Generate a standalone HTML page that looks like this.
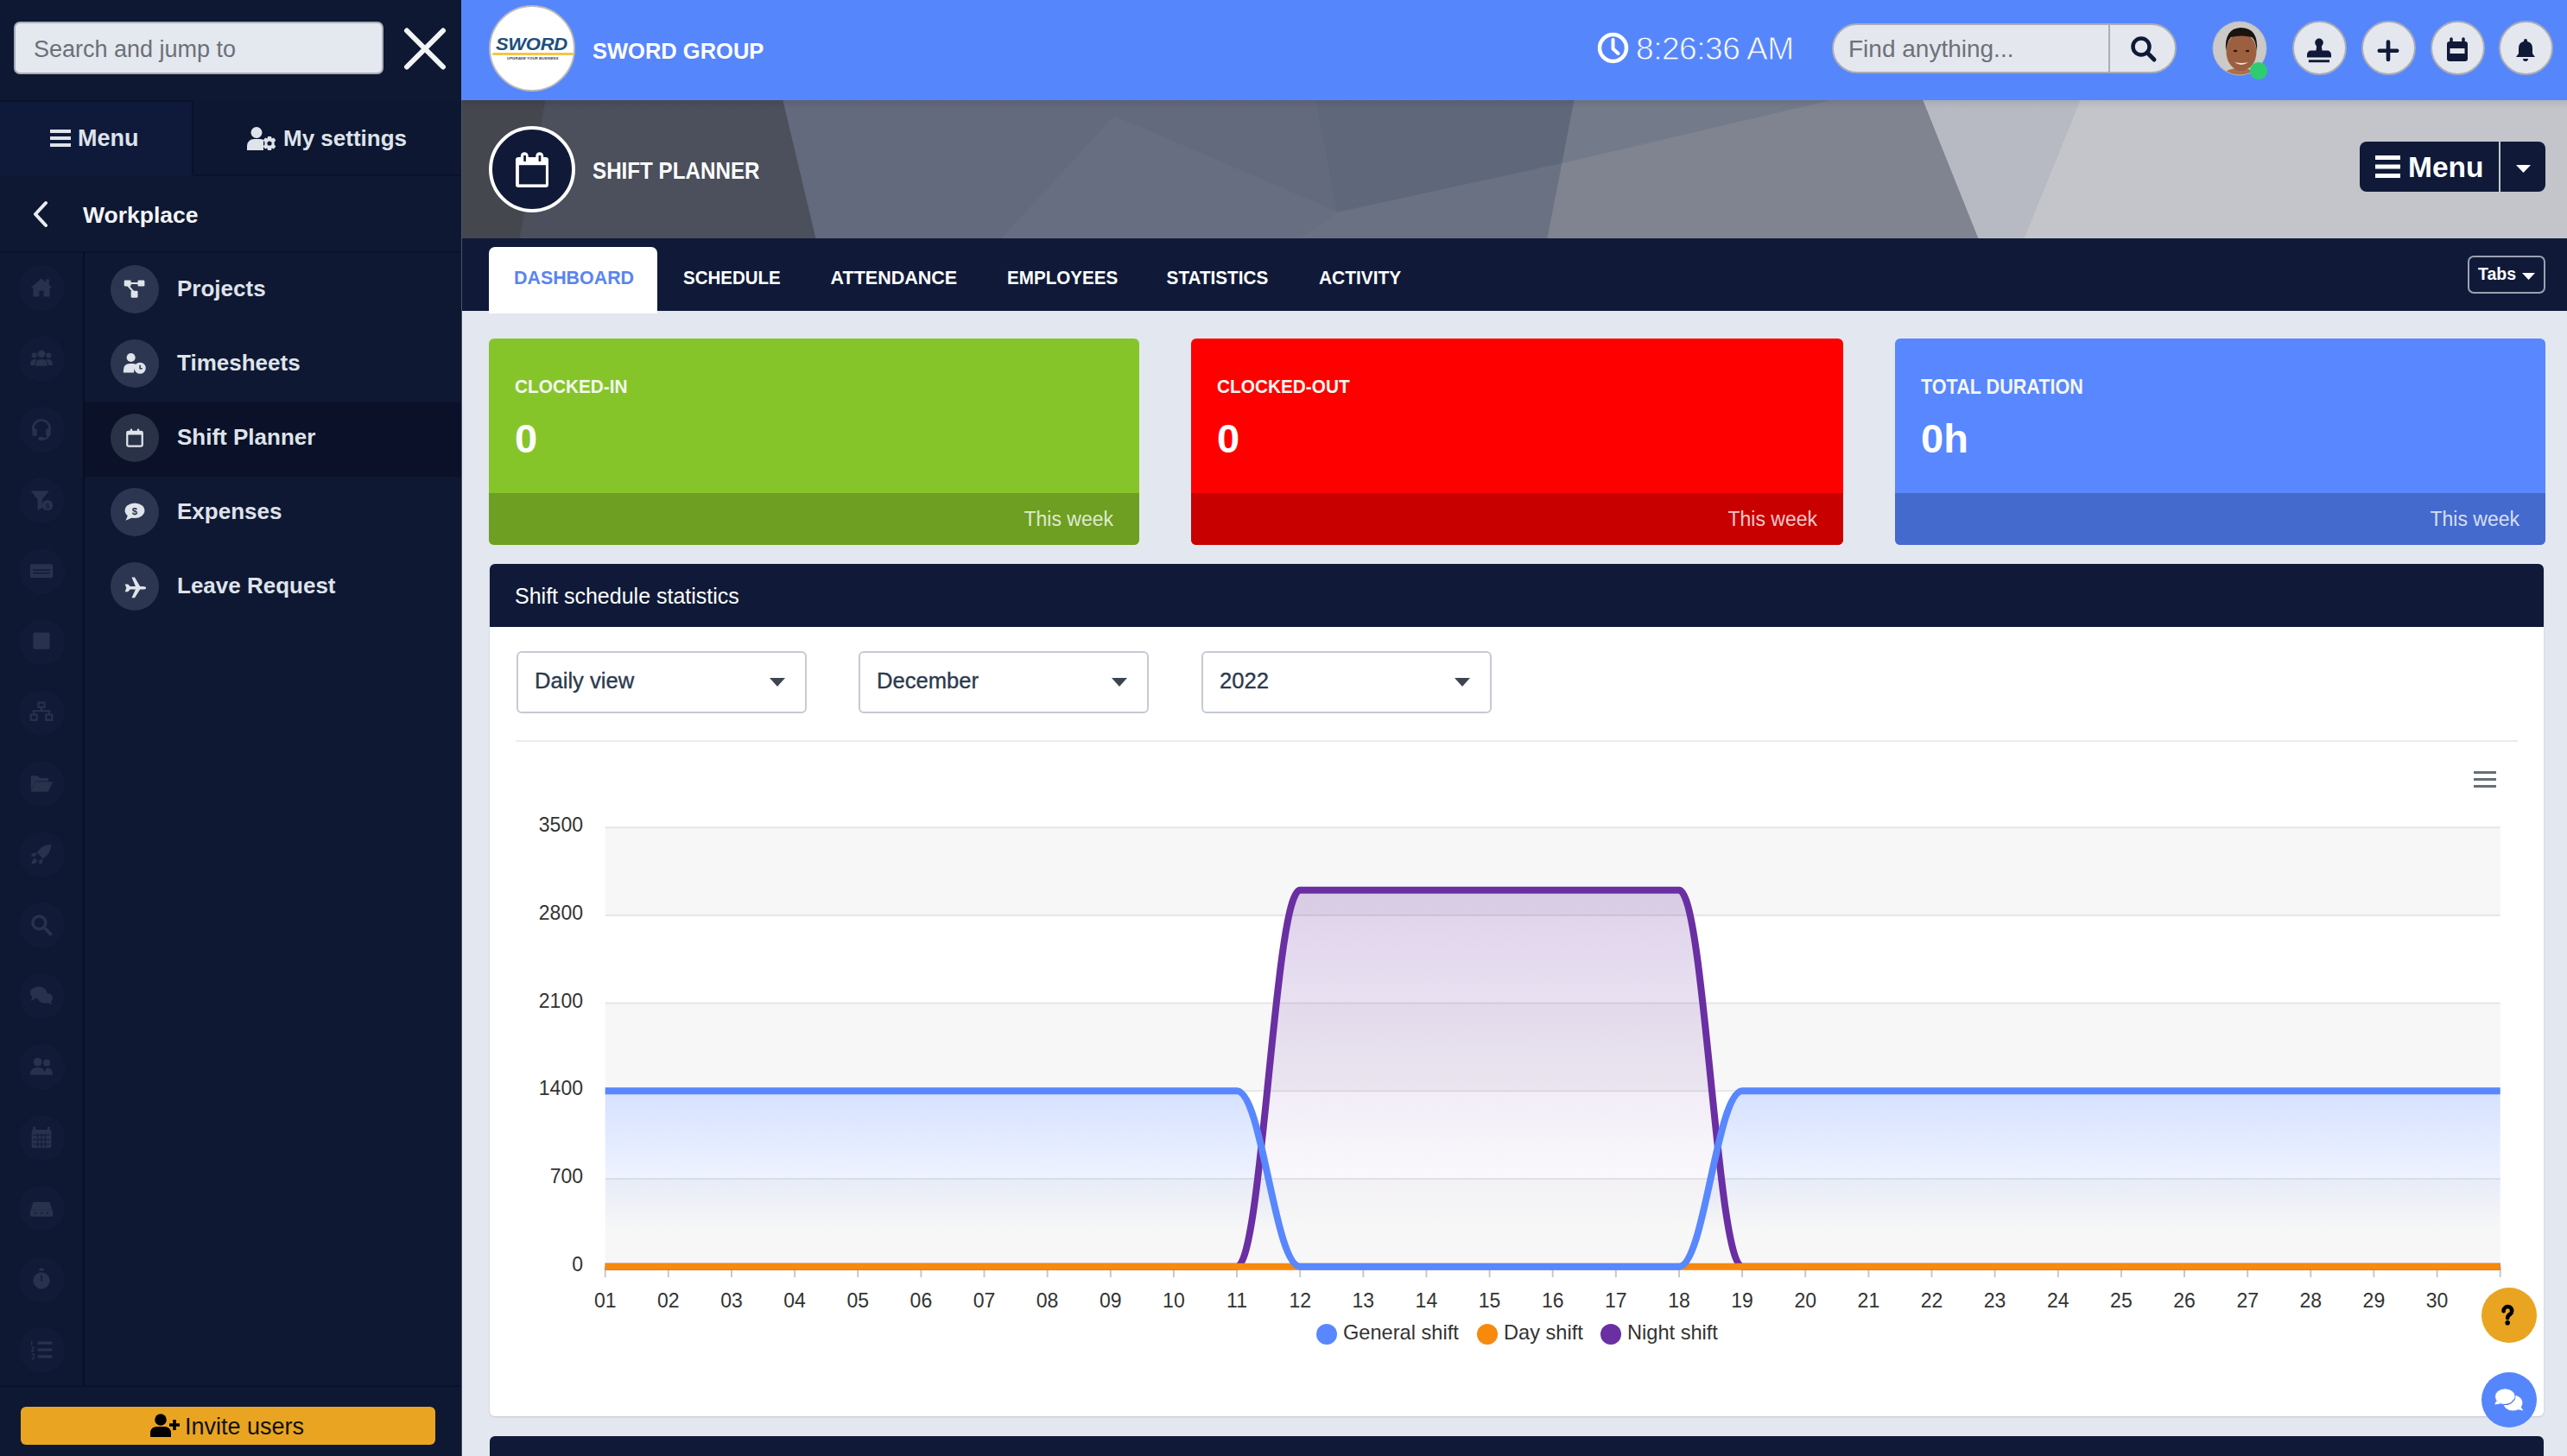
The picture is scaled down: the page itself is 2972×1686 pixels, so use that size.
<!DOCTYPE html>
<html><head><meta charset="utf-8">
<style>
*{box-sizing:border-box;margin:0;padding:0}
html,body{width:2972px;height:1686px;overflow:hidden}
body{position:relative;background:#e3e7ef;font-family:"Liberation Sans",sans-serif;}
.a{position:absolute}
.t{position:absolute;white-space:nowrap;line-height:1}
</style></head><body>

<!-- ============ SIDEBAR ============ -->
<div class="a" style="left:0;top:0;width:535px;height:1686px;background:#0e1833"></div>
<!-- search -->
<div class="a" style="left:16px;top:25px;width:428px;height:61px;background:#e4e8ef;border:2px solid #a7acb8;border-radius:7px"></div>
<div class="t" style="left:39px;top:44px;font-size:27px;color:#6b7078">Search and jump to</div>
<!-- close X -->
<svg class="a" style="left:462px;top:27px" width="60" height="60" viewBox="0 0 60 60"><path d="M9 8.5 L51 50.5 M51 8.5 L9 50.5" stroke="#f2f4f6" stroke-width="6" stroke-linecap="round"/></svg>

<!-- menu / settings tabs -->
<div class="a" style="left:0;top:116px;width:224px;height:87px;background:#0f1a3a;border-top:2px solid #0a1226;border-right:2px solid #0a1226"></div>
<div class="a" style="left:224px;top:117px;width:310px;height:87px;background:#0d1731;border-bottom:2px solid #0a1226"></div>
<svg class="a" style="left:58px;top:150px" width="24" height="20" viewBox="0 0 24 20"><rect x="0" y="0" width="24" height="4" fill="#dfe3ea"/><rect x="0" y="8" width="24" height="4" fill="#dfe3ea"/><rect x="0" y="16" width="24" height="4" fill="#dfe3ea"/></svg>
<div class="t" style="left:90px;top:147px;font-size:27px;font-weight:bold;color:#dfe3ea">Menu</div>
<div class="t" style="left:328px;top:147px;font-size:26px;font-weight:bold;color:#dfe3ea">My settings</div>
<svg class="a" style="left:286px;top:147px" width="35" height="27" viewBox="0 0 35 27"><circle cx="11" cy="6.5" r="6.5" fill="#dfe3ea"/><path d="M0 27 V22 A8 8 0 0 1 8 14 H15 A8 8 0 0 1 19 15 L19 27Z" fill="#dfe3ea"/><g transform="translate(26,19)"><path d="M-2 -8 H2 L2.6 -5.6 L5 -6.6 L7.3 -3.5 L5.6 -1.6 L5.6 1.6 L7.3 3.5 L5 6.6 L2.6 5.6 L2 8 H-2 L-2.6 5.6 L-5 6.6 L-7.3 3.5 L-5.6 1.6 L-5.6 -1.6 L-7.3 -3.5 L-5 -6.6 L-2.6 -5.6Z" fill="#dfe3ea"/><circle r="2.6" fill="#0d1733"/></g></svg>

<!-- workplace -->
<svg class="a" style="left:36px;top:232px" width="22" height="32" viewBox="0 0 22 32"><path d="M17 3 L5 16 L17 29" stroke="#e9ecf1" stroke-width="4" fill="none" stroke-linecap="round" stroke-linejoin="round"/></svg>
<div class="t" style="left:96px;top:236px;font-size:26.5px;font-weight:bold;color:#f3f5f8">Workplace</div>
<div class="a" style="left:0;top:291px;width:535px;height:2px;background:#0a1229"></div>

<!-- rail -->
<div class="a" style="left:96px;top:293px;width:2px;height:1312px;background:#090e20"></div>
<div class="a" style="left:22px;top:307px;width:53px;height:53px;border-radius:50%;background:#111b38"></div>
<svg class="a" style="left:34px;top:319px" width="28" height="28" viewBox="0 0 32 32"><path d="M16 4 L2 16 L5 16 L5 28 L13 28 L13 20 L19 20 L19 28 L27 28 L27 16 L30 16 Z" fill="#29324d"/><rect x="22" y="5" width="4" height="7" fill="#29324d"/></svg>
<div class="a" style="left:22px;top:389px;width:53px;height:53px;border-radius:50%;background:#111b38"></div>
<svg class="a" style="left:34px;top:401px" width="28" height="28" viewBox="0 0 32 32"><circle cx="16" cy="10" r="5" fill="#29324d"/><circle cx="6.5" cy="12" r="3.5" fill="#29324d"/><circle cx="25.5" cy="12" r="3.5" fill="#29324d"/><path d="M8 26 Q8 17 16 17 Q24 17 24 26Z" fill="#29324d"/><path d="M1 25 Q1 17 7 17 Q9 17 10 18 Q7 21 7 25Z" fill="#29324d"/><path d="M31 25 Q31 17 25 17 Q23 17 22 18 Q25 21 25 25Z" fill="#29324d"/></svg>
<div class="a" style="left:22px;top:471px;width:53px;height:53px;border-radius:50%;background:#111b38"></div>
<svg class="a" style="left:34px;top:483px" width="28" height="28" viewBox="0 0 32 32"><path d="M5 18 V15 A11 11 0 0 1 27 15 V18" stroke="#29324d" stroke-width="3" fill="none"/><rect x="4" y="15" width="6" height="10" rx="2" fill="#29324d"/><rect x="22" y="15" width="6" height="10" rx="2" fill="#29324d"/><path d="M25 24 Q25 29 17 29" stroke="#29324d" stroke-width="2.5" fill="none"/><rect x="12" y="26" width="7" height="5" rx="2" fill="#29324d"/></svg>
<div class="a" style="left:22px;top:553px;width:53px;height:53px;border-radius:50%;background:#111b38"></div>
<svg class="a" style="left:34px;top:565px" width="28" height="28" viewBox="0 0 32 32"><path d="M2 4 H26 L17 15 V26 L11 30 V15 Z" fill="#29324d"/><circle cx="24" cy="23" r="7" fill="#29324d"/><text x="24" y="27" font-size="10" font-weight="bold" text-anchor="middle" fill="#131e3b" font-family="Liberation Sans">$</text></svg>
<div class="a" style="left:22px;top:635px;width:53px;height:53px;border-radius:50%;background:#111b38"></div>
<svg class="a" style="left:34px;top:647px" width="28" height="28" viewBox="0 0 32 32"><rect x="1" y="7" width="30" height="18" rx="2" fill="#29324d"/><rect x="5" y="14" width="22" height="2" fill="#131e3b"/><rect x="5" y="18" width="22" height="2" fill="#131e3b"/></svg>
<div class="a" style="left:22px;top:717px;width:53px;height:53px;border-radius:50%;background:#111b38"></div>
<svg class="a" style="left:34px;top:729px" width="28" height="28" viewBox="0 0 32 32"><rect x="5" y="4" width="22" height="22" rx="2" fill="#29324d"/></svg>
<div class="a" style="left:22px;top:799px;width:53px;height:53px;border-radius:50%;background:#111b38"></div>
<svg class="a" style="left:34px;top:811px" width="28" height="28" viewBox="0 0 32 32"><rect x="12" y="3" width="8" height="6" fill="none" stroke="#29324d" stroke-width="2.5"/><path d="M16 9 V14 M4 14 H28 M6 14 V19 M26 14 V19" stroke="#29324d" stroke-width="2.5" fill="none"/><rect x="2" y="19" width="8" height="7" fill="none" stroke="#29324d" stroke-width="2.5"/><rect x="22" y="19" width="8" height="7" fill="none" stroke="#29324d" stroke-width="2.5"/></svg>
<div class="a" style="left:22px;top:881px;width:53px;height:53px;border-radius:50%;background:#111b38"></div>
<svg class="a" style="left:34px;top:893px" width="28" height="28" viewBox="0 0 32 32"><path d="M2 6 H11 L14 9 H25 V13 H8 L2 26 Z" fill="#29324d"/><path d="M8 14 H31 L25 27 H2 Z" fill="#29324d"/></svg>
<div class="a" style="left:22px;top:963px;width:53px;height:53px;border-radius:50%;background:#111b38"></div>
<svg class="a" style="left:34px;top:975px" width="28" height="28" viewBox="0 0 32 32"><path d="M28 3 Q16 4 10 14 L18 22 Q28 16 29 4Z" fill="#29324d"/><path d="M10 14 L4 15 L2 19 L8 19Z M18 22 L17 28 L13 30 L13 24Z" fill="#29324d"/><path d="M7 21 Q3 24 3 29 Q8 29 11 25Z" fill="#29324d"/></svg>
<div class="a" style="left:22px;top:1045px;width:53px;height:53px;border-radius:50%;background:#111b38"></div>
<svg class="a" style="left:34px;top:1057px" width="28" height="28" viewBox="0 0 32 32"><circle cx="13" cy="13" r="8.5" stroke="#29324d" stroke-width="4" fill="none"/><path d="M19.5 19.5 L28 28" stroke="#29324d" stroke-width="4.5" stroke-linecap="round"/></svg>
<div class="a" style="left:22px;top:1127px;width:53px;height:53px;border-radius:50%;background:#111b38"></div>
<svg class="a" style="left:34px;top:1139px" width="28" height="28" viewBox="0 0 32 32"><ellipse cx="12" cy="12" rx="11" ry="8" fill="#29324d"/><path d="M4 17 L2 23 L9 19Z" fill="#29324d"/><ellipse cx="21" cy="19" rx="10" ry="7" fill="#29324d"/><path d="M28 23 L30 28 L24 25Z" fill="#29324d"/></svg>
<div class="a" style="left:22px;top:1209px;width:53px;height:53px;border-radius:50%;background:#111b38"></div>
<svg class="a" style="left:34px;top:1221px" width="28" height="28" viewBox="0 0 32 32"><circle cx="11" cy="10" r="5.5" fill="#29324d"/><path d="M1 27 Q1 17 11 17 Q21 17 21 27Z" fill="#29324d"/><circle cx="23" cy="11" r="4.5" fill="#29324d"/><path d="M20 27 Q21 18 24 18 Q31 18 31 27Z" fill="#29324d"/></svg>
<div class="a" style="left:22px;top:1291px;width:53px;height:53px;border-radius:50%;background:#111b38"></div>
<svg class="a" style="left:34px;top:1303px" width="28" height="28" viewBox="0 0 32 32"><rect x="5" y="2" width="3" height="6" fill="#29324d"/><rect x="24" y="2" width="3" height="6" fill="#29324d"/><rect x="3" y="6" width="26" height="24" rx="2" fill="#29324d"/><path d="M5 13 H27 M5 19 H27 M5 25 H27 M11 11 V29 M16 11 V29 M21 11 V29" stroke="#131e3b" stroke-width="1.5"/></svg>
<div class="a" style="left:22px;top:1373px;width:53px;height:53px;border-radius:50%;background:#111b38"></div>
<svg class="a" style="left:34px;top:1385px" width="28" height="28" viewBox="0 0 32 32"><path d="M5 8 H27 L30 18 H2 Z" fill="#29324d"/><rect x="1" y="18" width="30" height="9" rx="2" fill="#29324d"/><circle cx="8" cy="22.5" r="1.3" fill="#131e3b"/><circle cx="16" cy="22.5" r="1.3" fill="#131e3b"/><circle cx="24" cy="22.5" r="1.3" fill="#131e3b"/></svg>
<div class="a" style="left:22px;top:1455px;width:53px;height:53px;border-radius:50%;background:#111b38"></div>
<svg class="a" style="left:34px;top:1467px" width="28" height="28" viewBox="0 0 32 32"><rect x="13" y="2" width="6" height="3" fill="#29324d"/><circle cx="16" cy="18" r="11" fill="#29324d"/><rect x="15" y="11" width="2" height="8" fill="#131e3b"/></svg>
<div class="a" style="left:22px;top:1537px;width:53px;height:53px;border-radius:50%;background:#111b38"></div>
<svg class="a" style="left:34px;top:1549px" width="28" height="28" viewBox="0 0 32 32"><path d="M11 7 H30 M11 16 H30 M11 25 H30" stroke="#29324d" stroke-width="3.5"/><path d="M3 4 V10 M3 13 H6 L3 18 H6 M3 22 H6 V28 H3" stroke="#29324d" stroke-width="1.5" fill="none"/></svg>

<!-- menu list -->
<div class="a" style="left:98px;top:466px;width:437px;height:86px;background:#0a1128"></div>
<div class="a" style="left:128px;top:307px;width:56px;height:56px;border-radius:50%;background:#2c3650"></div>
<svg class="a" style="left:142px;top:321px" width="28" height="28" viewBox="0 0 32 32"><rect x="2" y="4" width="9" height="8" rx="1.5" fill="#dfe3ea"/><rect x="20" y="4" width="9" height="8" rx="1.5" fill="#dfe3ea"/><rect x="11" y="18" width="9" height="9" rx="1.5" fill="#dfe3ea"/><path d="M10 8 H21 M7 11 L14 19" stroke="#dfe3ea" stroke-width="2.5"/></svg>
<div class="t" style="left:205px;top:321px;font-size:26px;font-weight:bold;color:#dfe3ea">Projects</div>
<div class="a" style="left:128px;top:393px;width:56px;height:56px;border-radius:50%;background:#2c3650"></div>
<svg class="a" style="left:142px;top:407px" width="28" height="28" viewBox="0 0 32 32"><circle cx="11" cy="8" r="5.8" fill="#dfe3ea"/><path d="M1 28 V25 Q1 16 10 16 H13 Q17 16 19 18 Q15 21 15 28 Z" fill="#dfe3ea"/><circle cx="23" cy="22" r="7.5" fill="#dfe3ea"/><path d="M23 18 V22.5 H26" stroke="#2c3650" stroke-width="1.8" fill="none"/></svg>
<div class="t" style="left:205px;top:407px;font-size:26px;font-weight:bold;color:#dfe3ea">Timesheets</div>
<div class="a" style="left:128px;top:479px;width:56px;height:56px;border-radius:50%;background:#2a3247"></div>
<svg class="a" style="left:142px;top:493px" width="28" height="28" viewBox="0 0 32 32"><rect x="6" y="8" width="20" height="19" rx="1.5" fill="none" stroke="#dfe3ea" stroke-width="2.6"/><rect x="6" y="8" width="20" height="4" fill="#dfe3ea"/><rect x="10" y="4" width="2.8" height="7" rx="1.3" fill="#dfe3ea"/><rect x="19.2" y="4" width="2.8" height="7" rx="1.3" fill="#dfe3ea"/></svg>
<div class="t" style="left:205px;top:493px;font-size:26px;font-weight:bold;color:#dfe3ea">Shift Planner</div>
<div class="a" style="left:128px;top:565px;width:56px;height:56px;border-radius:50%;background:#2c3650"></div>
<svg class="a" style="left:142px;top:579px" width="28" height="28" viewBox="0 0 32 32"><ellipse cx="16" cy="14" rx="13" ry="10" fill="#dfe3ea"/><path d="M7 20 L4 27 L13 23Z" fill="#dfe3ea"/><text x="16" y="19" font-size="13" font-weight="bold" text-anchor="middle" fill="#2c3650" font-family="Liberation Sans">$</text></svg>
<div class="t" style="left:205px;top:579px;font-size:26px;font-weight:bold;color:#dfe3ea">Expenses</div>
<div class="a" style="left:128px;top:651px;width:56px;height:56px;border-radius:50%;background:#2c3650"></div>
<svg class="a" style="left:142px;top:665px" width="28" height="28" viewBox="0 0 32 32"><path d="M3 13 L7 13 L10 16 L17 16 L12 4 L16 4 L23 16 L27 16 Q31 16 31 18 Q31 20 27 20 L23 20 L16 31 L12 31 L17 20 L10 20 L7 23 L3 23 L5 18Z" fill="#dfe3ea"/></svg>
<div class="t" style="left:205px;top:665px;font-size:26px;font-weight:bold;color:#dfe3ea">Leave Request</div>

<!-- invite -->
<div class="a" style="left:0;top:1604px;width:535px;height:2px;background:#0a1229"></div>
<div class="a" style="left:24px;top:1629px;width:480px;height:44px;background:#e9a521;border-radius:6px"></div>
<div class="t" style="left:214px;top:1639px;font-size:27px;color:#111">Invite users</div>
<svg class="a" style="left:174px;top:1637px" width="34" height="27" viewBox="0 0 34 27"><circle cx="12" cy="7" r="6.8" fill="#000"/><path d="M0 27 V23 Q0 15 8 15 H16 Q24 15 24 23 V27Z" fill="#000"/><path d="M28 7 V19 M22 13 H34" stroke="#000" stroke-width="3.6"/></svg>

<div class="a" style="left:534px;top:116px;width:1px;height:1570px;background:#4b5468"></div>
<!-- ============ HEADER ============ -->
<div class="a" style="left:534px;top:0;width:2438px;height:116px;background:#5686fb"></div>
<!-- logo -->
<div class="a" style="left:566px;top:6px;width:100px;height:100px;border-radius:50%;background:#fff;border:2px solid #b9b9b9"></div>
<div class="t" style="left:574px;top:41px;font-size:22px;font-weight:bold;font-style:italic;color:#1d4f7e;letter-spacing:-0.3px;transform:scaleY(0.92);transform-origin:0 0">SWORD</div>
<div class="a" style="left:570px;top:61px;width:94px;height:3px;background:#f0c648;border-radius:2px"></div>
<div class="t" style="left:587px;top:65.5px;font-size:4.4px;font-weight:bold;font-style:italic;color:#333a48">UPGRADE YOUR BUSINESS</div>
<div class="t" style="left:686px;top:47px;font-size:25.5px;font-weight:bold;color:#fff">SWORD GROUP</div>
<!-- clock -->
<svg class="a" style="left:1849px;top:37px" width="37" height="37" viewBox="0 0 37 37"><circle cx="18.5" cy="18.5" r="15.5" fill="none" stroke="#fff" stroke-width="4.5"/><path d="M18.5 9 V19.5 L24.5 25" stroke="#fff" stroke-width="4" fill="none" stroke-linecap="round" stroke-linejoin="round"/></svg>
<div class="t" style="left:1894px;top:38px;font-size:37px;color:#fff;letter-spacing:-0.45px;-webkit-text-stroke:0.8px #5686fb">8:26:36 AM</div>
<!-- search -->
<div class="a" style="left:2121px;top:27px;width:399px;height:58px;border-radius:29px;background:#e4e7ee;border:2px solid #a9adb6"></div>
<div class="a" style="left:2441px;top:28px;width:2px;height:56px;background:#a9adb6"></div>
<div class="t" style="left:2140px;top:43px;font-size:28px;color:#6d7179">Find anything...</div>
<svg class="a" style="left:2466px;top:41px" width="32" height="32" viewBox="0 0 32 32"><circle cx="13" cy="13" r="9.5" fill="none" stroke="#101a38" stroke-width="4.5"/><path d="M20 20 L28 28" stroke="#101a38" stroke-width="5" stroke-linecap="round"/></svg>
<!-- avatar -->
<svg class="a" style="left:2561px;top:23px" width="65" height="66" viewBox="0 0 65 66">
<defs><clipPath id="av"><circle cx="32" cy="33" r="30.5"/></clipPath></defs>
<circle cx="32" cy="33" r="31.5" fill="#b4b8c2"/>
<g clip-path="url(#av)">
<rect width="65" height="66" fill="#cbcac8"/>
<path d="M8 70 Q12 56 32 56 Q52 56 56 70Z" fill="#a9704e"/>
<ellipse cx="33" cy="47" rx="11" ry="12" fill="#8a5234"/>
<ellipse cx="34" cy="37" rx="17.5" ry="22" fill="#9c6040"/>
<path d="M16 36 Q14 10 33 9 Q54 9 52 36 Q50 22 46 20 Q34 17 22 20 Q18 24 16 36Z" fill="#1a1410"/>
<ellipse cx="27" cy="36" rx="2.3" ry="1.3" fill="#2a1a12"/><ellipse cx="41" cy="36" rx="2.3" ry="1.3" fill="#2a1a12"/>
<path d="M26 49 Q34 55 42 49 Q34 51 26 49Z" fill="#f0e4dc"/>
</g></svg>
<div class="a" style="left:2605px;top:72px;width:19.5px;height:19.5px;border-radius:50%;background:#2ecc71"></div>
<div class="a" style="left:2654px;top:24px;width:63px;height:63px;border-radius:50%;background:#e4e7ee;border:2.5px solid #a9adb6"></div>
<svg class="a" style="left:2669px;top:42px" width="32" height="32" viewBox="0 0 32 32"><circle cx="16" cy="7.4" r="4.8" fill="#101a38"/><path d="M12.8 9 H19.2 Q18.6 13 19.6 17 H12.4 Q13.4 13 12.8 9Z" fill="#101a38"/><path d="M2 24.6 V21 A4.4 4.4 0 0 1 6.4 16.6 H25.6 A4.4 4.4 0 0 1 30 21 V24.6Z" fill="#101a38"/><rect x="3.9" y="27.3" width="24.1" height="2.9" fill="#101a38"/></svg>
<div class="a" style="left:2734px;top:24px;width:63px;height:63px;border-radius:50%;background:#e4e7ee;border:2.5px solid #a9adb6"></div>
<svg class="a" style="left:2749px;top:42px" width="32" height="32" viewBox="0 0 32 32"><path d="M16 6.5V27M5.8 16.8H26.2" stroke="#101a38" stroke-width="4.6" stroke-linecap="round"/></svg>
<div class="a" style="left:2814px;top:24px;width:63px;height:63px;border-radius:50%;background:#e4e7ee;border:2.5px solid #a9adb6"></div>
<svg class="a" style="left:2829px;top:42px" width="32" height="32" viewBox="0 0 32 32"><path d="M9 3v4M23 3v4" stroke="#101a38" stroke-width="3.5" stroke-linecap="round"/><rect x="4" y="6" width="24" height="23" rx="3" fill="#101a38"/><rect x="7.5" y="14" width="17" height="6" fill="#e4e7ee"/></svg>
<div class="a" style="left:2893px;top:24px;width:63px;height:63px;border-radius:50%;background:#e4e7ee;border:2.5px solid #a9adb6"></div>
<svg class="a" style="left:2908px;top:42px" width="32" height="32" viewBox="0 0 32 32"><path d="M16 3a2 2 0 0 1 2 2v1a8 8 0 0 1 6 8v6l3 4H5l3-4v-6a8 8 0 0 1 6-8V5a2 2 0 0 1 2-2z M13 26h6a3 3 0 0 1-6 0z" fill="#101a38"/></svg>

<!-- ============ BANNER ============ -->
<svg class="a" style="left:535px;top:116px" width="2437" height="160" viewBox="535 116 2437 160" shape-rendering="geometricPrecision">
<rect x="535" y="116" width="2437" height="160" fill="#c3c5ca"/>
<polygon points="535,116 632,116 602,276 535,276" fill="#45474f" stroke="#45474f" stroke-width="1.2"/>
<polygon points="632,116 907,116 945,276 602,276" fill="#4c4f5c" stroke="#4c4f5c" stroke-width="1.2"/>
<polygon points="907,116 1524,116 1549,246 1505,276 945,276" fill="#646a7d" stroke="#646a7d" stroke-width="1.2"/>
<polygon points="1290,134.5 1549,246 1505,276 1160,276" fill="#686e81" stroke="#686e81" stroke-width="1.2"/>
<polygon points="1524,116 1823,116 1808.8,189.5 1549,246" fill="#5f677b" stroke="#5f677b" stroke-width="1.2"/>
<polygon points="1549,246 1808.8,189.5 1792,276 1505,276" fill="#6a7183" stroke="#6a7183" stroke-width="1.2"/>
<polygon points="1823,116 2122,116 1808.8,189.5" fill="#737a89" stroke="#737a89" stroke-width="1.2"/>
<polygon points="1808.8,189.5 2122,116 2227,116 2291,276 1792,276" fill="#7f8490" stroke="#7f8490" stroke-width="1.2"/>
<polygon points="2227,116 2408,116 2343,276 2291,276" fill="#b7bac2" stroke="#b7bac2" stroke-width="1.2"/>
</svg>
<div class="a" style="left:535px;top:116px;width:2437px;height:10px;background:linear-gradient(rgba(0,0,0,.08),rgba(0,0,0,0))"></div>
<div class="a" style="left:566px;top:146px;width:100px;height:100px;border-radius:50%;background:#101a38;border:4.5px solid #fff"></div>
<svg class="a" style="left:596px;top:175px" width="40" height="43" viewBox="0 0 40 43"><rect x="6.8" y="1.3" width="8.9" height="10" rx="4.4" fill="#fff"/><rect x="24.3" y="1.3" width="8.9" height="10" rx="4.4" fill="#fff"/><rect x="1" y="7" width="38" height="35" rx="3.2" fill="#fff"/><rect x="4.9" y="16.2" width="31" height="22.2" fill="#101a38"/><rect x="10.2" y="5" width="2.7" height="6.9" fill="#101a38"/><rect x="27.6" y="5" width="2.7" height="6.9" fill="#101a38"/></svg>
<div class="t" style="left:686px;top:185px;font-size:24.2px;font-weight:bold;color:#fff;transform:scaleY(1.12);transform-origin:0 0">SHIFT PLANNER</div>
<!-- menu button -->
<div class="a" style="left:2732px;top:164px;width:215px;height:58px;border-radius:8px;background:#101a38"></div>
<div class="a" style="left:2893px;top:164px;width:2px;height:58px;background:#c3c5ca"></div>
<svg class="a" style="left:2750px;top:180px" width="29" height="26"><rect y="0" width="29" height="5" fill="#fff"/><rect y="10.5" width="29" height="5" fill="#fff"/><rect y="21" width="29" height="5" fill="#fff"/></svg>
<div class="t" style="left:2788px;top:177px;font-size:33.5px;font-weight:bold;color:#fff">Menu</div>
<svg class="a" style="left:2913px;top:191px" width="17" height="9"><path d="M0 0H17L8.5 9Z" fill="#fff"/></svg>

<!-- ============ NAV ============ -->
<div class="a" style="left:535px;top:276px;width:2437px;height:84px;background:#101a38"></div>
<div class="a" style="left:566px;top:286px;width:195px;height:77px;background:#fff;border-radius:7px 7px 0 0"></div>
<div class="t" style="left:595px;top:311px;font-size:21.4px;font-weight:bold;color:#5a85ee;transform:scaleY(1.04);transform-origin:0 0">DASHBOARD</div>
<div class="t" style="left:791px;top:311px;font-size:20.5px;font-weight:bold;color:#fff;transform:scaleY(1.04);transform-origin:0 0">SCHEDULE</div>
<div class="t" style="left:961.6px;top:311px;font-size:21.5px;font-weight:bold;color:#fff;transform:scaleY(1.04);transform-origin:0 0">ATTENDANCE</div>
<div class="t" style="left:1166px;top:311px;font-size:20.6px;font-weight:bold;color:#fff;transform:scaleY(1.04);transform-origin:0 0">EMPLOYEES</div>
<div class="t" style="left:1350.6px;top:311px;font-size:20.7px;font-weight:bold;color:#fff;transform:scaleY(1.04);transform-origin:0 0">STATISTICS</div>
<div class="t" style="left:1527px;top:311px;font-size:20.9px;font-weight:bold;color:#fff;transform:scaleY(1.04);transform-origin:0 0">ACTIVITY</div>
<div class="a" style="left:2857px;top:296px;width:90px;height:44px;border-radius:7px;border:2px solid #9ba1b1"></div>
<div class="t" style="left:2869px;top:308px;font-size:19.5px;font-weight:bold;color:#fff">Tabs</div>
<svg class="a" style="left:2920px;top:316px" width="15" height="8"><path d="M0 0H15L7.5 8Z" fill="#fff"/></svg>

<!-- ============ CONTENT ============ -->
<div class="a" style="left:566px;top:392px;width:753px;height:239px;background:#86c52a;border-radius:6px;overflow:hidden"><div class="a" style="left:0;top:179px;width:753px;height:60px;background:#6e9f22"></div></div>
<div class="t" style="left:596px;top:435.5px;font-size:20.8px;font-weight:bold;color:#f4f7ef;transform:scaleY(1.09);transform-origin:0 0">CLOCKED-IN</div>
<div class="t" style="left:596px;top:484px;font-size:47px;font-weight:bold;color:#fff">0</div>
<div class="t" style="right:1683px;top:590px;font-size:23px;color:rgba(255,255,255,.8)">This week</div>
<div class="a" style="left:1379px;top:392px;width:755px;height:239px;background:#ff0000;border-radius:6px;overflow:hidden"><div class="a" style="left:0;top:179px;width:755px;height:60px;background:#c80000"></div></div>
<div class="t" style="left:1409px;top:435.5px;font-size:20.8px;font-weight:bold;color:#f4f7ef;transform:scaleY(1.09);transform-origin:0 0">CLOCKED-OUT</div>
<div class="t" style="left:1409px;top:484px;font-size:47px;font-weight:bold;color:#fff">0</div>
<div class="t" style="right:868px;top:590px;font-size:23px;color:rgba(255,255,255,.8)">This week</div>
<div class="a" style="left:2194px;top:392px;width:753px;height:239px;background:#5887ff;border-radius:6px;overflow:hidden"><div class="a" style="left:0;top:179px;width:753px;height:60px;background:#456acd"></div></div>
<div class="t" style="left:2224px;top:435.5px;font-size:21.6px;font-weight:bold;color:#f4f7ef;transform:scaleY(1.09);transform-origin:0 0">TOTAL DURATION</div>
<div class="t" style="left:2224px;top:484px;font-size:47px;font-weight:bold;color:#fff">0h</div>
<div class="t" style="right:55px;top:590px;font-size:23px;color:rgba(255,255,255,.8)">This week</div>

<div class="a" style="left:567px;top:653px;width:2378px;height:987px;background:#fff;border-radius:6px;box-shadow:0 1px 2px rgba(0,0,0,.15)"></div>
<div class="a" style="left:567px;top:653px;width:2378px;height:73px;background:#101a38;border-radius:6px 6px 0 0"></div>
<div class="t" style="left:596px;top:678px;font-size:25px;color:#fff">Shift schedule statistics</div>
<div class="a" style="left:598px;top:754px;width:336px;height:72px;border:2px solid #c5cad3;border-radius:6px;background:#fff"></div>
<div class="t" style="left:619px;top:776px;font-size:25.6px;color:#2b3a4e;-webkit-text-stroke:0.35px #2b3a4e">Daily view</div>
<svg class="a" style="left:891px;top:785px" width="18" height="10"><path d="M0 0 L18 0 L9 10Z" fill="#3d4550"/></svg>
<div class="a" style="left:994px;top:754px;width:336px;height:72px;border:2px solid #c5cad3;border-radius:6px;background:#fff"></div>
<div class="t" style="left:1015px;top:776px;font-size:25.6px;color:#2b3a4e;-webkit-text-stroke:0.35px #2b3a4e">December</div>
<svg class="a" style="left:1287px;top:785px" width="18" height="10"><path d="M0 0 L18 0 L9 10Z" fill="#3d4550"/></svg>
<div class="a" style="left:1391px;top:754px;width:336px;height:72px;border:2px solid #c5cad3;border-radius:6px;background:#fff"></div>
<div class="t" style="left:1412px;top:776px;font-size:25.6px;color:#2b3a4e;-webkit-text-stroke:0.35px #2b3a4e">2022</div>
<svg class="a" style="left:1684px;top:785px" width="18" height="10"><path d="M0 0 L18 0 L9 10Z" fill="#3d4550"/></svg>
<div class="a" style="left:597px;top:857px;width:2318px;height:2px;background:#e9ecf0"></div>
<svg class="a" style="left:0;top:0" width="2972" height="1686" viewBox="0 0 2972 1686">
<defs><linearGradient id="gb" x1="0" y1="0" x2="0" y2="1"><stop offset="0" stop-color="#5887ff" stop-opacity="0.25"/><stop offset="0.5" stop-color="#5887ff" stop-opacity="0.1"/><stop offset="0.8" stop-color="#5887ff" stop-opacity="0"/></linearGradient><clipPath id="plotclip"><rect x="700.70" y="900" width="2194.00" height="580"/></clipPath><linearGradient id="gp" x1="0" y1="0" x2="0" y2="1"><stop offset="0" stop-color="#6a2fa3" stop-opacity="0.22"/><stop offset="0.9" stop-color="#6a2fa3" stop-opacity="0"/></linearGradient></defs>
<rect x="700.7" y="958.2" width="2194.0" height="101.7" fill="#f7f7f7"/>
<rect x="700.7" y="1161.6" width="2194.0" height="101.7" fill="#f7f7f7"/>
<rect x="700.7" y="1365.0" width="2194.0" height="101.7" fill="#f7f7f7"/>
<rect x="700.7" y="957.2" width="2194.0" height="2" fill="#e6e6e6"/>
<rect x="700.7" y="1058.9" width="2194.0" height="2" fill="#e6e6e6"/>
<rect x="700.7" y="1160.6" width="2194.0" height="2" fill="#e6e6e6"/>
<rect x="700.7" y="1262.3" width="2194.0" height="2" fill="#e6e6e6"/>
<rect x="700.7" y="1364.0" width="2194.0" height="2" fill="#e6e6e6"/>
<rect x="699.7" y="1467" width="2" height="12" fill="#c8c8c8"/>
<rect x="772.8" y="1467" width="2" height="12" fill="#c8c8c8"/>
<rect x="846.0" y="1467" width="2" height="12" fill="#c8c8c8"/>
<rect x="919.1" y="1467" width="2" height="12" fill="#c8c8c8"/>
<rect x="992.2" y="1467" width="2" height="12" fill="#c8c8c8"/>
<rect x="1065.4" y="1467" width="2" height="12" fill="#c8c8c8"/>
<rect x="1138.5" y="1467" width="2" height="12" fill="#c8c8c8"/>
<rect x="1211.6" y="1467" width="2" height="12" fill="#c8c8c8"/>
<rect x="1284.8" y="1467" width="2" height="12" fill="#c8c8c8"/>
<rect x="1357.9" y="1467" width="2" height="12" fill="#c8c8c8"/>
<rect x="1431.0" y="1467" width="2" height="12" fill="#c8c8c8"/>
<rect x="1504.2" y="1467" width="2" height="12" fill="#c8c8c8"/>
<rect x="1577.3" y="1467" width="2" height="12" fill="#c8c8c8"/>
<rect x="1650.4" y="1467" width="2" height="12" fill="#c8c8c8"/>
<rect x="1723.6" y="1467" width="2" height="12" fill="#c8c8c8"/>
<rect x="1796.7" y="1467" width="2" height="12" fill="#c8c8c8"/>
<rect x="1869.8" y="1467" width="2" height="12" fill="#c8c8c8"/>
<rect x="1943.0" y="1467" width="2" height="12" fill="#c8c8c8"/>
<rect x="2016.1" y="1467" width="2" height="12" fill="#c8c8c8"/>
<rect x="2089.2" y="1467" width="2" height="12" fill="#c8c8c8"/>
<rect x="2162.4" y="1467" width="2" height="12" fill="#c8c8c8"/>
<rect x="2235.5" y="1467" width="2" height="12" fill="#c8c8c8"/>
<rect x="2308.6" y="1467" width="2" height="12" fill="#c8c8c8"/>
<rect x="2381.8" y="1467" width="2" height="12" fill="#c8c8c8"/>
<rect x="2454.9" y="1467" width="2" height="12" fill="#c8c8c8"/>
<rect x="2528.0" y="1467" width="2" height="12" fill="#c8c8c8"/>
<rect x="2601.2" y="1467" width="2" height="12" fill="#c8c8c8"/>
<rect x="2674.3" y="1467" width="2" height="12" fill="#c8c8c8"/>
<rect x="2747.4" y="1467" width="2" height="12" fill="#c8c8c8"/>
<rect x="2820.6" y="1467" width="2" height="12" fill="#c8c8c8"/>
<rect x="2893.7" y="1467" width="2" height="12" fill="#c8c8c8"/>
<path d="M 700.70 1263.30 C 700.70 1263.30 744.58 1263.30 773.83 1263.30 C 803.09 1263.30 817.71 1263.30 846.97 1263.30 C 876.22 1263.30 890.85 1263.30 920.10 1263.30 C 949.35 1263.30 963.98 1263.30 993.23 1263.30 C 1022.49 1263.30 1037.11 1263.30 1066.37 1263.30 C 1095.62 1263.30 1110.25 1263.30 1139.50 1263.30 C 1168.75 1263.30 1183.38 1263.30 1212.63 1263.30 C 1241.89 1263.30 1256.51 1263.30 1285.77 1263.30 C 1315.02 1263.30 1329.65 1263.30 1358.90 1263.30 C 1388.15 1263.30 1402.78 1263.30 1432.03 1263.30 C 1461.29 1263.30 1475.91 1466.70 1505.17 1466.70 C 1534.42 1466.70 1549.05 1466.70 1578.30 1466.70 C 1607.55 1466.70 1622.18 1466.70 1651.43 1466.70 C 1680.69 1466.70 1695.31 1466.70 1724.57 1466.70 C 1753.82 1466.70 1768.45 1466.70 1797.70 1466.70 C 1826.95 1466.70 1841.58 1466.70 1870.83 1466.70 C 1900.09 1466.70 1914.71 1466.70 1943.97 1466.70 C 1973.22 1466.70 1987.85 1263.30 2017.10 1263.30 C 2046.35 1263.30 2060.98 1263.30 2090.23 1263.30 C 2119.49 1263.30 2134.11 1263.30 2163.37 1263.30 C 2192.62 1263.30 2207.25 1263.30 2236.50 1263.30 C 2265.75 1263.30 2280.38 1263.30 2309.63 1263.30 C 2338.89 1263.30 2353.51 1263.30 2382.77 1263.30 C 2412.02 1263.30 2426.65 1263.30 2455.90 1263.30 C 2485.15 1263.30 2499.78 1263.30 2529.03 1263.30 C 2558.29 1263.30 2572.91 1263.30 2602.17 1263.30 C 2631.42 1263.30 2646.05 1263.30 2675.30 1263.30 C 2704.55 1263.30 2719.18 1263.30 2748.43 1263.30 C 2777.69 1263.30 2792.31 1263.30 2821.57 1263.30 C 2850.82 1263.30 2894.70 1263.30 2894.70 1263.30 L 2894.70 1466.70 L 700.70 1466.70 Z" fill="url(#gb)"/>
<path d="M 700.70 1466.70 C 700.70 1466.70 744.58 1466.70 773.83 1466.70 C 803.09 1466.70 817.71 1466.70 846.97 1466.70 C 876.22 1466.70 890.85 1466.70 920.10 1466.70 C 949.35 1466.70 963.98 1466.70 993.23 1466.70 C 1022.49 1466.70 1037.11 1466.70 1066.37 1466.70 C 1095.62 1466.70 1110.25 1466.70 1139.50 1466.70 C 1168.75 1466.70 1183.38 1466.70 1212.63 1466.70 C 1241.89 1466.70 1256.51 1466.70 1285.77 1466.70 C 1315.02 1466.70 1329.65 1466.70 1358.90 1466.70 C 1388.15 1466.70 1402.78 1466.70 1432.03 1466.70 C 1461.29 1466.70 1475.91 1030.84 1505.17 1030.84 C 1534.42 1030.84 1549.05 1030.84 1578.30 1030.84 C 1607.55 1030.84 1622.18 1030.84 1651.43 1030.84 C 1680.69 1030.84 1695.31 1030.84 1724.57 1030.84 C 1753.82 1030.84 1768.45 1030.84 1797.70 1030.84 C 1826.95 1030.84 1841.58 1030.84 1870.83 1030.84 C 1900.09 1030.84 1914.71 1030.84 1943.97 1030.84 C 1973.22 1030.84 1987.85 1466.70 2017.10 1466.70 C 2046.35 1466.70 2060.98 1466.70 2090.23 1466.70 C 2119.49 1466.70 2134.11 1466.70 2163.37 1466.70 C 2192.62 1466.70 2207.25 1466.70 2236.50 1466.70 C 2265.75 1466.70 2280.38 1466.70 2309.63 1466.70 C 2338.89 1466.70 2353.51 1466.70 2382.77 1466.70 C 2412.02 1466.70 2426.65 1466.70 2455.90 1466.70 C 2485.15 1466.70 2499.78 1466.70 2529.03 1466.70 C 2558.29 1466.70 2572.91 1466.70 2602.17 1466.70 C 2631.42 1466.70 2646.05 1466.70 2675.30 1466.70 C 2704.55 1466.70 2719.18 1466.70 2748.43 1466.70 C 2777.69 1466.70 2792.31 1466.70 2821.57 1466.70 C 2850.82 1466.70 2894.70 1466.70 2894.70 1466.70 L 2894.70 1466.70 L 700.70 1466.70 Z" fill="url(#gp)"/>
<path d="M 700.70 1466.70 C 700.70 1466.70 744.58 1466.70 773.83 1466.70 C 803.09 1466.70 817.71 1466.70 846.97 1466.70 C 876.22 1466.70 890.85 1466.70 920.10 1466.70 C 949.35 1466.70 963.98 1466.70 993.23 1466.70 C 1022.49 1466.70 1037.11 1466.70 1066.37 1466.70 C 1095.62 1466.70 1110.25 1466.70 1139.50 1466.70 C 1168.75 1466.70 1183.38 1466.70 1212.63 1466.70 C 1241.89 1466.70 1256.51 1466.70 1285.77 1466.70 C 1315.02 1466.70 1329.65 1466.70 1358.90 1466.70 C 1388.15 1466.70 1402.78 1466.70 1432.03 1466.70 C 1461.29 1466.70 1475.91 1030.84 1505.17 1030.84 C 1534.42 1030.84 1549.05 1030.84 1578.30 1030.84 C 1607.55 1030.84 1622.18 1030.84 1651.43 1030.84 C 1680.69 1030.84 1695.31 1030.84 1724.57 1030.84 C 1753.82 1030.84 1768.45 1030.84 1797.70 1030.84 C 1826.95 1030.84 1841.58 1030.84 1870.83 1030.84 C 1900.09 1030.84 1914.71 1030.84 1943.97 1030.84 C 1973.22 1030.84 1987.85 1466.70 2017.10 1466.70 C 2046.35 1466.70 2060.98 1466.70 2090.23 1466.70 C 2119.49 1466.70 2134.11 1466.70 2163.37 1466.70 C 2192.62 1466.70 2207.25 1466.70 2236.50 1466.70 C 2265.75 1466.70 2280.38 1466.70 2309.63 1466.70 C 2338.89 1466.70 2353.51 1466.70 2382.77 1466.70 C 2412.02 1466.70 2426.65 1466.70 2455.90 1466.70 C 2485.15 1466.70 2499.78 1466.70 2529.03 1466.70 C 2558.29 1466.70 2572.91 1466.70 2602.17 1466.70 C 2631.42 1466.70 2646.05 1466.70 2675.30 1466.70 C 2704.55 1466.70 2719.18 1466.70 2748.43 1466.70 C 2777.69 1466.70 2792.31 1466.70 2821.57 1466.70 C 2850.82 1466.70 2894.70 1466.70 2894.70 1466.70" fill="none" stroke="#6a2fa3" stroke-width="8" stroke-linejoin="round" stroke-linecap="round" clip-path="url(#plotclip)"/>
<path d="M 700.70 1466.70 C 700.70 1466.70 744.58 1466.70 773.83 1466.70 C 803.09 1466.70 817.71 1466.70 846.97 1466.70 C 876.22 1466.70 890.85 1466.70 920.10 1466.70 C 949.35 1466.70 963.98 1466.70 993.23 1466.70 C 1022.49 1466.70 1037.11 1466.70 1066.37 1466.70 C 1095.62 1466.70 1110.25 1466.70 1139.50 1466.70 C 1168.75 1466.70 1183.38 1466.70 1212.63 1466.70 C 1241.89 1466.70 1256.51 1466.70 1285.77 1466.70 C 1315.02 1466.70 1329.65 1466.70 1358.90 1466.70 C 1388.15 1466.70 1402.78 1466.70 1432.03 1466.70 C 1461.29 1466.70 1475.91 1466.70 1505.17 1466.70 C 1534.42 1466.70 1549.05 1466.70 1578.30 1466.70 C 1607.55 1466.70 1622.18 1466.70 1651.43 1466.70 C 1680.69 1466.70 1695.31 1466.70 1724.57 1466.70 C 1753.82 1466.70 1768.45 1466.70 1797.70 1466.70 C 1826.95 1466.70 1841.58 1466.70 1870.83 1466.70 C 1900.09 1466.70 1914.71 1466.70 1943.97 1466.70 C 1973.22 1466.70 1987.85 1466.70 2017.10 1466.70 C 2046.35 1466.70 2060.98 1466.70 2090.23 1466.70 C 2119.49 1466.70 2134.11 1466.70 2163.37 1466.70 C 2192.62 1466.70 2207.25 1466.70 2236.50 1466.70 C 2265.75 1466.70 2280.38 1466.70 2309.63 1466.70 C 2338.89 1466.70 2353.51 1466.70 2382.77 1466.70 C 2412.02 1466.70 2426.65 1466.70 2455.90 1466.70 C 2485.15 1466.70 2499.78 1466.70 2529.03 1466.70 C 2558.29 1466.70 2572.91 1466.70 2602.17 1466.70 C 2631.42 1466.70 2646.05 1466.70 2675.30 1466.70 C 2704.55 1466.70 2719.18 1466.70 2748.43 1466.70 C 2777.69 1466.70 2792.31 1466.70 2821.57 1466.70 C 2850.82 1466.70 2894.70 1466.70 2894.70 1466.70" fill="none" stroke="#f7890c" stroke-width="8" stroke-linejoin="round" stroke-linecap="round" clip-path="url(#plotclip)"/>
<path d="M 700.70 1263.30 C 700.70 1263.30 744.58 1263.30 773.83 1263.30 C 803.09 1263.30 817.71 1263.30 846.97 1263.30 C 876.22 1263.30 890.85 1263.30 920.10 1263.30 C 949.35 1263.30 963.98 1263.30 993.23 1263.30 C 1022.49 1263.30 1037.11 1263.30 1066.37 1263.30 C 1095.62 1263.30 1110.25 1263.30 1139.50 1263.30 C 1168.75 1263.30 1183.38 1263.30 1212.63 1263.30 C 1241.89 1263.30 1256.51 1263.30 1285.77 1263.30 C 1315.02 1263.30 1329.65 1263.30 1358.90 1263.30 C 1388.15 1263.30 1402.78 1263.30 1432.03 1263.30 C 1461.29 1263.30 1475.91 1466.70 1505.17 1466.70 C 1534.42 1466.70 1549.05 1466.70 1578.30 1466.70 C 1607.55 1466.70 1622.18 1466.70 1651.43 1466.70 C 1680.69 1466.70 1695.31 1466.70 1724.57 1466.70 C 1753.82 1466.70 1768.45 1466.70 1797.70 1466.70 C 1826.95 1466.70 1841.58 1466.70 1870.83 1466.70 C 1900.09 1466.70 1914.71 1466.70 1943.97 1466.70 C 1973.22 1466.70 1987.85 1263.30 2017.10 1263.30 C 2046.35 1263.30 2060.98 1263.30 2090.23 1263.30 C 2119.49 1263.30 2134.11 1263.30 2163.37 1263.30 C 2192.62 1263.30 2207.25 1263.30 2236.50 1263.30 C 2265.75 1263.30 2280.38 1263.30 2309.63 1263.30 C 2338.89 1263.30 2353.51 1263.30 2382.77 1263.30 C 2412.02 1263.30 2426.65 1263.30 2455.90 1263.30 C 2485.15 1263.30 2499.78 1263.30 2529.03 1263.30 C 2558.29 1263.30 2572.91 1263.30 2602.17 1263.30 C 2631.42 1263.30 2646.05 1263.30 2675.30 1263.30 C 2704.55 1263.30 2719.18 1263.30 2748.43 1263.30 C 2777.69 1263.30 2792.31 1263.30 2821.57 1263.30 C 2850.82 1263.30 2894.70 1263.30 2894.70 1263.30" fill="none" stroke="#5887ff" stroke-width="8" stroke-linejoin="round" stroke-linecap="round" clip-path="url(#plotclip)"/>
</svg>
<div class="t" style="right:2297px;top:944.2px;font-size:23px;color:#333">3500</div>
<div class="t" style="right:2297px;top:1045.9px;font-size:23px;color:#333">2800</div>
<div class="t" style="right:2297px;top:1147.6px;font-size:23px;color:#333">2100</div>
<div class="t" style="right:2297px;top:1249.3px;font-size:23px;color:#333">1400</div>
<div class="t" style="right:2297px;top:1351.0px;font-size:23px;color:#333">700</div>
<div class="t" style="right:2297px;top:1452.7px;font-size:23px;color:#333">0</div>
<div class="t" style="left:660.7px;width:80px;text-align:center;top:1495px;font-size:23px;color:#333">01</div>
<div class="t" style="left:733.8px;width:80px;text-align:center;top:1495px;font-size:23px;color:#333">02</div>
<div class="t" style="left:807.0px;width:80px;text-align:center;top:1495px;font-size:23px;color:#333">03</div>
<div class="t" style="left:880.1px;width:80px;text-align:center;top:1495px;font-size:23px;color:#333">04</div>
<div class="t" style="left:953.2px;width:80px;text-align:center;top:1495px;font-size:23px;color:#333">05</div>
<div class="t" style="left:1026.4px;width:80px;text-align:center;top:1495px;font-size:23px;color:#333">06</div>
<div class="t" style="left:1099.5px;width:80px;text-align:center;top:1495px;font-size:23px;color:#333">07</div>
<div class="t" style="left:1172.6px;width:80px;text-align:center;top:1495px;font-size:23px;color:#333">08</div>
<div class="t" style="left:1245.8px;width:80px;text-align:center;top:1495px;font-size:23px;color:#333">09</div>
<div class="t" style="left:1318.9px;width:80px;text-align:center;top:1495px;font-size:23px;color:#333">10</div>
<div class="t" style="left:1392.0px;width:80px;text-align:center;top:1495px;font-size:23px;color:#333">11</div>
<div class="t" style="left:1465.2px;width:80px;text-align:center;top:1495px;font-size:23px;color:#333">12</div>
<div class="t" style="left:1538.3px;width:80px;text-align:center;top:1495px;font-size:23px;color:#333">13</div>
<div class="t" style="left:1611.4px;width:80px;text-align:center;top:1495px;font-size:23px;color:#333">14</div>
<div class="t" style="left:1684.6px;width:80px;text-align:center;top:1495px;font-size:23px;color:#333">15</div>
<div class="t" style="left:1757.7px;width:80px;text-align:center;top:1495px;font-size:23px;color:#333">16</div>
<div class="t" style="left:1830.8px;width:80px;text-align:center;top:1495px;font-size:23px;color:#333">17</div>
<div class="t" style="left:1904.0px;width:80px;text-align:center;top:1495px;font-size:23px;color:#333">18</div>
<div class="t" style="left:1977.1px;width:80px;text-align:center;top:1495px;font-size:23px;color:#333">19</div>
<div class="t" style="left:2050.2px;width:80px;text-align:center;top:1495px;font-size:23px;color:#333">20</div>
<div class="t" style="left:2123.4px;width:80px;text-align:center;top:1495px;font-size:23px;color:#333">21</div>
<div class="t" style="left:2196.5px;width:80px;text-align:center;top:1495px;font-size:23px;color:#333">22</div>
<div class="t" style="left:2269.6px;width:80px;text-align:center;top:1495px;font-size:23px;color:#333">23</div>
<div class="t" style="left:2342.8px;width:80px;text-align:center;top:1495px;font-size:23px;color:#333">24</div>
<div class="t" style="left:2415.9px;width:80px;text-align:center;top:1495px;font-size:23px;color:#333">25</div>
<div class="t" style="left:2489.0px;width:80px;text-align:center;top:1495px;font-size:23px;color:#333">26</div>
<div class="t" style="left:2562.2px;width:80px;text-align:center;top:1495px;font-size:23px;color:#333">27</div>
<div class="t" style="left:2635.3px;width:80px;text-align:center;top:1495px;font-size:23px;color:#333">28</div>
<div class="t" style="left:2708.4px;width:80px;text-align:center;top:1495px;font-size:23px;color:#333">29</div>
<div class="t" style="left:2781.6px;width:80px;text-align:center;top:1495px;font-size:23px;color:#333">30</div>
<div class="a" style="left:1524px;top:1533px;width:24px;height:24px;border-radius:50%;background:#5887ff"></div>
<div class="t" style="left:1555px;top:1532px;font-size:23.6px;color:#333">General shift</div>
<div class="a" style="left:1710px;top:1533px;width:24px;height:24px;border-radius:50%;background:#f7890c"></div>
<div class="t" style="left:1741px;top:1532px;font-size:23.6px;color:#333">Day shift</div>
<div class="a" style="left:1853px;top:1533px;width:24px;height:24px;border-radius:50%;background:#6a2fa3"></div>
<div class="t" style="left:1884px;top:1532px;font-size:23.6px;color:#333">Night shift</div>
<svg class="a" style="left:2864px;top:893px" width="26" height="19"><rect y="0" width="26" height="3" fill="#666f7a"/><rect y="8" width="26" height="3" fill="#666f7a"/><rect y="16" width="26" height="3" fill="#666f7a"/></svg>
<div class="a" style="left:567px;top:1663px;width:2378px;height:40px;background:#101a38;border-radius:6px"></div>
<div class="a" style="left:2873px;top:1491px;width:64px;height:64px;border-radius:50%;background:#e9a521"></div>
<svg class="a" style="left:2873px;top:1491px" width="64" height="64" viewBox="0 0 64 64"><path d="M25.6 27.3 A4.8 4.8 0 1 1 33.4 30.6 Q30.2 32.3 30.2 35.2" fill="none" stroke="#000" stroke-width="4.6" stroke-linecap="round"/><circle cx="30.2" cy="40.8" r="2.8" fill="#000"/></svg>
<div class="a" style="left:2873px;top:1589px;width:64px;height:64px;border-radius:50%;background:#5686fb"></div>
<svg class="a" style="left:2873px;top:1589px" width="64" height="64" viewBox="0 0 64 64"><path d="M44 38 L48.5 44.5 L39 42.5Z" fill="#fff"/><ellipse cx="36.4" cy="35.4" rx="11" ry="9.2" fill="#fff"/><path d="M18 32 L15.3 37.5 L25 36Z" fill="#fff"/><ellipse cx="27.3" cy="28.2" rx="11.8" ry="9.4" fill="#fff" stroke="#5686fb" stroke-width="1"/><path d="M37.6 31.2 A11.8 9.4 0 0 1 26 37.5" fill="none" stroke="#3d5fb8" stroke-width="0.9"/><path d="M17 33.5 L15.6 37 L24 35.6Z" fill="#fff"/></svg>

</body></html>
